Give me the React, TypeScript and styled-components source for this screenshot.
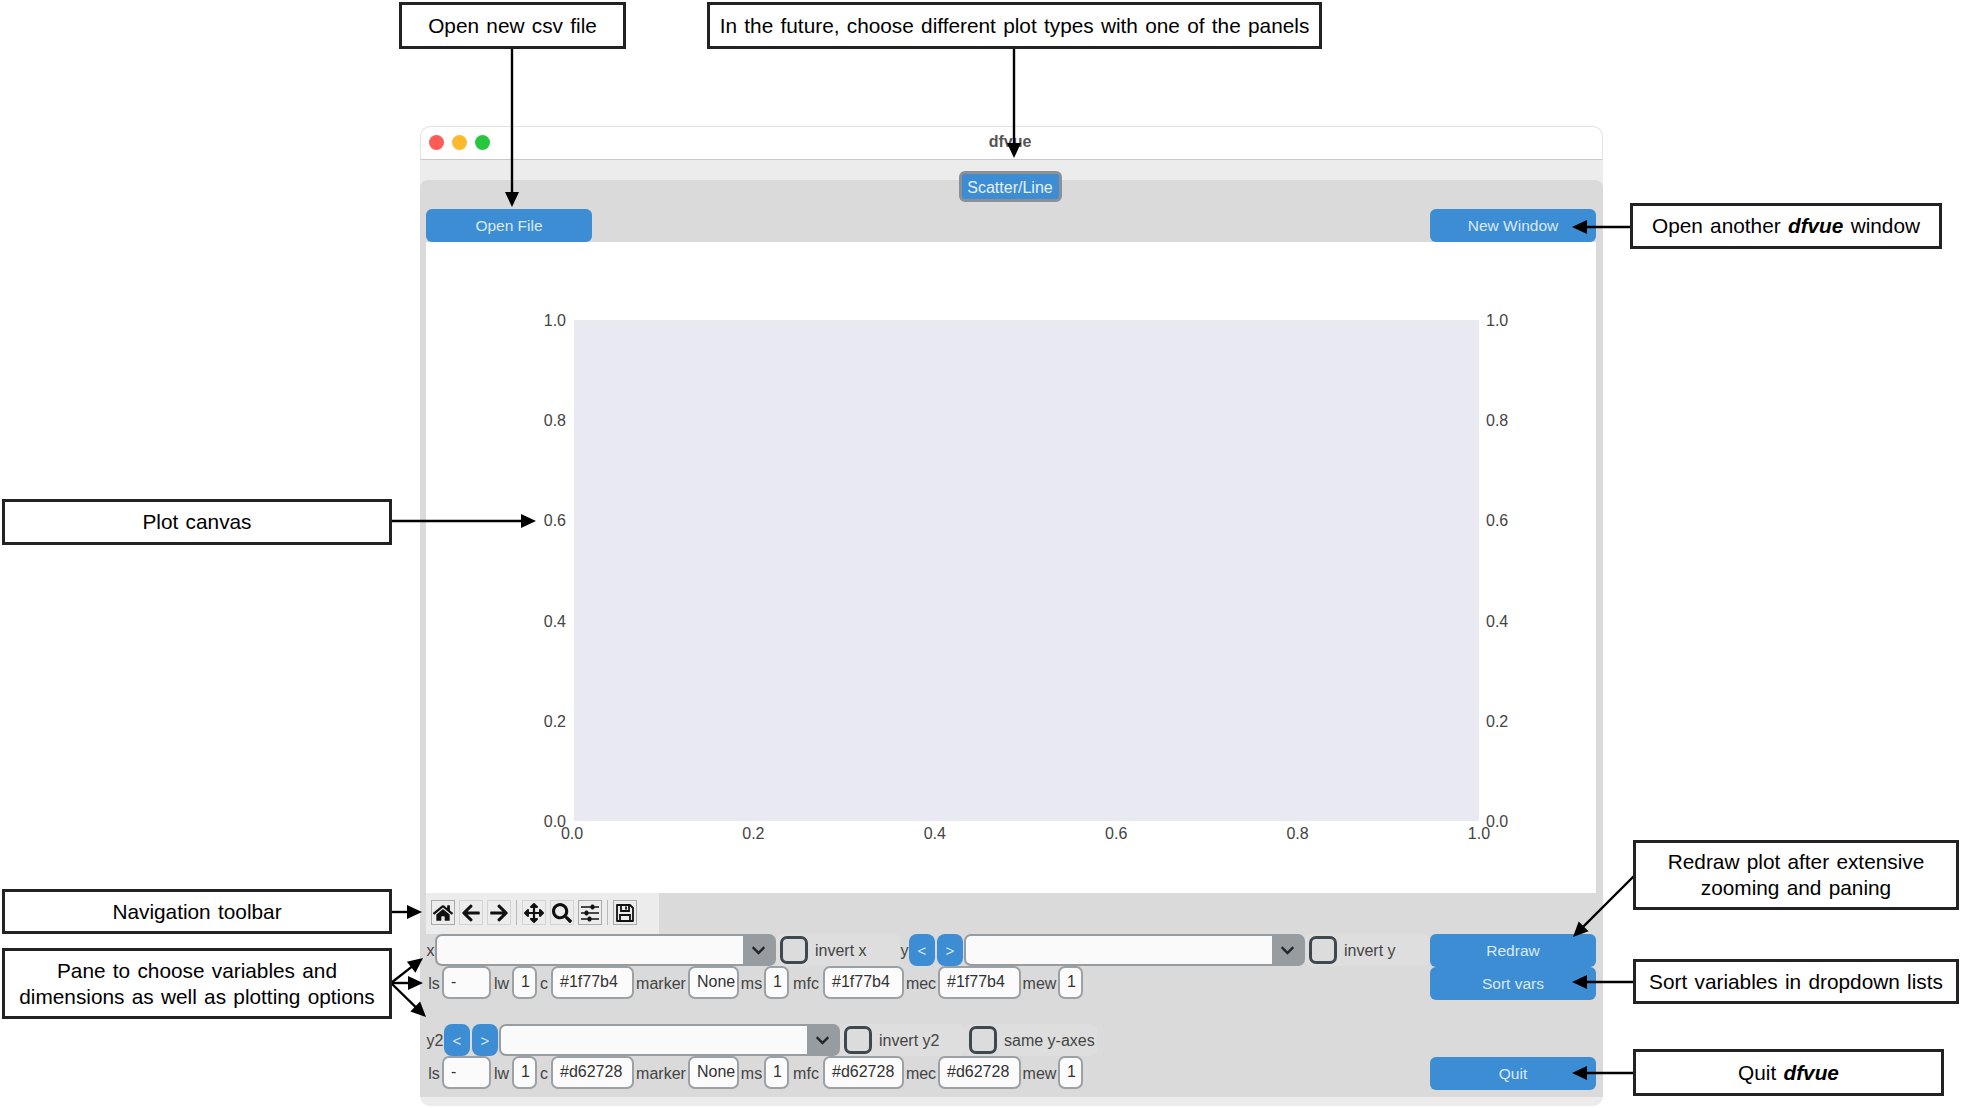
import React from "react";
import styled, { createGlobalStyle } from "styled-components";
import { FaArrowLeft, FaArrowRight, FaArrowsAlt, FaChevronDown, FaHome, FaSearch } from "react-icons/fa";

const BLUE = "#3c8dd3";
const GRAY = "#dadada";

const GlobalStyle = createGlobalStyle`
  html, body {
    margin: 0;
    padding: 0;
    background: #fff;
    font-family: "Liberation Sans", Arial, sans-serif;
  }
`;

const Page = styled.div`
  position: relative;
  width: 1963px;
  height: 1108px;
  overflow: hidden;
  padding: 126px 360px 0 420px;
  box-sizing: border-box;
`;

const Window = styled.div`
  width: 1183px;
  height: 980px;
  display: flex;
  flex-direction: column;
  background: #ececec;
  border-radius: 10px;
  overflow: hidden;
`;

const TitleBar = styled.div`
  position: relative;
  flex: none;
  height: 34px;
  box-sizing: border-box;
  padding: 0 3px 3px 0;
  display: flex;
  align-items: center;
  justify-content: center;
  background: #fff;
  border: 1px solid #e2e2e2;
  border-bottom: 1px solid #c8c8c8;
  border-radius: 10px 10px 0 0;
  font-size: 16px;
  font-weight: bold;
  color: #555;
`;

const Lights = styled.div`
  position: absolute;
  left: 8px;
  top: 8px;
  display: flex;
  gap: 8px;
`;

const Light = styled.span<{ $color: string }>`
  width: 15px;
  height: 15px;
  border-radius: 50%;
  background: ${({ $color }) => $color};
`;

const TabStrip = styled.div`
  flex: none;
  height: 20px;
  display: flex;
  justify-content: center;
  position: relative;
  z-index: 1;
`;

const Tab = styled.div`
  width: 103px;
  height: 31px;
  margin: 11px 0 0 -3px;
  padding-top: 2px;
  box-sizing: border-box;
  display: flex;
  align-items: center;
  justify-content: center;
  background: ${BLUE};
  border: 3px solid #8b9097;
  border-radius: 6px;
  color: #e6f0f9;
  font-size: 16px;
`;

const Panel = styled.div`
  flex: none;
  height: 917px;
  box-sizing: border-box;
  padding: 29px 7px 0 6px;
  background: ${GRAY};
  border-radius: 8px 8px 0 0;
  display: flex;
  flex-direction: column;
`;

const TopRow = styled.div`
  display: flex;
  justify-content: space-between;
`;

const BlueButton = styled.div<{ $gapAbove?: number }>`
  width: 166px;
  height: 33px;
  margin-top: ${({ $gapAbove }) => $gapAbove ?? 0}px;
  display: flex;
  align-items: center;
  justify-content: center;
  background: ${BLUE};
  border-radius: 6px;
  color: #dbe9f6;
  font-size: 15.5px;
`;

const Canvas = styled.div`
  height: 651px;
  box-sizing: border-box;
  padding-top: 78px;
  background: #fff;
  display: grid;
  grid-template-columns: 148px 905px 1fr;
  grid-template-rows: 501px auto;
  color: #444;
  font-size: 16px;
`;

const YAxis = styled.div<{ $right?: boolean }>`
  display: flex;
  flex-direction: column;
  justify-content: space-between;
  align-items: ${({ $right }) => ($right ? "flex-start" : "flex-end")};
  padding: ${({ $right }) => ($right ? "1px 0 0 7px" : "1px 8px 0 0")};
  margin-bottom: -1px;
`;

const YTick = styled.span`
  height: 0;
  line-height: 0;
`;

const PlotArea = styled.div`
  background: #e9e9f1;
`;

const XAxis = styled.div`
  grid-column: 2;
  display: flex;
  justify-content: space-between;
  padding-top: 4px;
  margin-left: -2px;
`;

const XTick = styled.span`
  width: 0;
  display: flex;
  justify-content: center;
`;

const Toolbar = styled.div`
  width: 233px;
  height: 41px;
  box-sizing: border-box;
  padding: 7px 0 0 5px;
  background: #ececec;
  display: flex;
  align-items: flex-start;
  gap: 4px;
`;

const ToolIcon = styled.div<{ $framed?: boolean }>`
  width: 24px;
  height: 25px;
  box-sizing: border-box;
  display: flex;
  align-items: center;
  justify-content: center;
  border: 1px solid ${({ $framed }) => ($framed ? "#a9a9a9" : "#d4d4d4")};
  color: #111;
  font-size: 20px;
`;

const ToolSeparator = styled.span`
  width: 1px;
  height: 25px;
  margin: 0 1px;
  background: #b9b9b9;
`;

const Controls = styled.div`
  display: flex;
  justify-content: space-between;
  color: #444;
  font-size: 16px;
`;

const Options = styled.div`
  display: flex;
  flex-direction: column;
`;

const Row = styled.div<{ $gapAbove?: number }>`
  display: flex;
  align-items: center;
  margin-top: ${({ $gapAbove }) => $gapAbove ?? 0}px;
`;

const Label = styled.span<{ $width: number }>`
  flex: none;
  width: ${({ $width }) => $width}px;
  padding-top: 2px;
  text-align: center;
`;

const Field = styled.div<{ $width: number }>`
  flex: none;
  width: ${({ $width }) => $width}px;
  height: 33px;
  box-sizing: border-box;
  display: flex;
  align-items: center;
  padding-left: 7px;
  padding-bottom: 2px;
  background: #fbfbfb;
  border: 2px solid #9ca1a6;
  border-radius: 7px;
  color: #333;
`;

const Combo = styled.div`
  flex: none;
  width: 341px;
  height: 32px;
  box-sizing: border-box;
  display: flex;
  background: #979ca1;
  border: 2px solid #979ca1;
  border-radius: 7px;
`;

const ComboText = styled.div`
  flex: 1;
  background: #fafafa;
  border-radius: 5px 0 0 5px;
`;

const ComboArrow = styled.div`
  width: 31px;
  display: flex;
  align-items: center;
  justify-content: center;
  color: #23272b;
  font-size: 15px;
`;

const StepGroup = styled.div`
  flex: none;
  display: flex;
  gap: 2px;
  margin-right: 1px;
`;

const StepButton = styled.div`
  width: 26px;
  height: 32px;
  display: flex;
  align-items: center;
  justify-content: center;
  background: ${BLUE};
  border-radius: 8px;
  color: #dbe9f6;
  font-size: 15px;
`;

const ToggleGroup = styled.div<{ $width: number }>`
  flex: none;
  width: ${({ $width }) => $width}px;
  height: 32px;
  display: flex;
  align-items: center;
  box-sizing: border-box;
  padding-left: 4px;
  background: #dedede;
  border-radius: 6px;
  color: #444;
  white-space: nowrap;
`;

const ToggleLabel = styled.span`
  padding-top: 2px;
`;

const CheckBox = styled.span`
  flex: none;
  width: 28px;
  height: 28px;
  margin-right: 7px;
  box-sizing: border-box;
  background: #dcdcdc;
  border: 3px solid #3f4750;
  border-radius: 7px;
`;

const SideButtons = styled.div`
  display: flex;
  flex-direction: column;
`;

const Callout = styled.div<{ $x: number; $y: number; $w: number; $h: number }>`
  position: absolute;
  left: ${({ $x }) => $x}px;
  top: ${({ $y }) => $y}px;
  width: ${({ $w }) => $w}px;
  height: ${({ $h }) => $h}px;
  box-sizing: border-box;
  display: flex;
  align-items: center;
  justify-content: center;
  text-align: center;
  background: #fff;
  border: 3px solid #222;
  color: #000;
  font-size: 20.8px;
  line-height: 26px;
  word-spacing: 1.5px;
`;

const ArrowLayer = styled.svg`
  position: absolute;
  left: 0;
  top: 0;
  pointer-events: none;
`;

const SlidersIcon = () => (
  <svg width="20" height="20" viewBox="0 0 20 20" fill="#111" stroke="#111">
    <path d="M1 4h18M1 10h18M1 16h18" strokeWidth="1.4" fill="none" />
    <rect x="11" y="2" width="3" height="4" rx="1" />
    <rect x="5" y="8" width="3" height="4" rx="1" />
    <rect x="8" y="14" width="3" height="4" rx="1" />
  </svg>
);

const SaveIcon = () => (
  <svg width="20" height="20" viewBox="0 0 20 20" fill="none" stroke="#111" strokeWidth="1.8">
    <path d="M2 2h13l3 3v13H2z" strokeLinejoin="round" />
    <path d="M6 2v6h8V2" />
    <path d="M11 3.5v3" />
    <path d="M5 18v-6h10v6" />
  </svg>
);

const ARROWS = [
  [512, 48, 512, 207],
  [1014, 48, 1014, 158],
  [1630, 227, 1572, 227],
  [391, 521, 536, 521],
  [391, 912, 422, 912],
  [391, 983, 423, 958],
  [391, 983, 423, 983],
  [391, 983, 426, 1017],
  [1634, 876, 1573, 937],
  [1634, 982, 1572, 982],
  [1634, 1073, 1572, 1073],
];

const Arrow = ({ line }: { line: number[] }) => {
  const [x1, y1, x2, y2] = line;
  const angle = (Math.atan2(y2 - y1, x2 - x1) * 180) / Math.PI;
  const len = Math.hypot(x2 - x1, y2 - y1);
  return (
    <g transform={`translate(${x1} ${y1}) rotate(${angle})`}>
      <line x1="0" y1="0" x2={len - 10} y2="0" stroke="#000" strokeWidth="2.4" />
      <polygon points={`${len},0 ${len - 15},-7 ${len - 15},7`} fill="#000" />
    </g>
  );
};

const ticks = ["0.0", "0.2", "0.4", "0.6", "0.8", "1.0"];

const StyleRow = ({ color }: { color: string }) => (
  <Row>
    <Label $width={16}>ls</Label>
    <Field $width={49}>-</Field>
    <Label $width={21}>lw</Label>
    <Field $width={25}>1</Field>
    <Label $width={14}>c</Label>
    <Field $width={83}>{color}</Field>
    <Label $width={54}>marker</Label>
    <Field $width={51}>None</Field>
    <Label $width={25}>ms</Label>
    <Field $width={25}>1</Field>
    <Label $width={34}>mfc</Label>
    <Field $width={81}>{color}</Field>
    <Label $width={34}>mec</Label>
    <Field $width={83}>{color}</Field>
    <Label $width={37}>mew</Label>
    <Field $width={25}>1</Field>
  </Row>
);

const ComboBox = () => (
  <Combo>
    <ComboText />
    <ComboArrow>
      <FaChevronDown />
    </ComboArrow>
  </Combo>
);

const Steps = () => (
  <StepGroup>
    <StepButton>&lt;</StepButton>
    <StepButton>&gt;</StepButton>
  </StepGroup>
);

const Toggle = ({ width, label }: { width: number; label: string }) => (
  <ToggleGroup $width={width}>
    <CheckBox />
    <ToggleLabel>{label}</ToggleLabel>
  </ToggleGroup>
);

export default function App() {
  return (
    <Page>
      <GlobalStyle />
      <Window>
        <TitleBar>
          <Lights>
            <Light $color="#fd5b56" />
            <Light $color="#fdb92d" />
            <Light $color="#27c63f" />
          </Lights>
          dfvue
        </TitleBar>
        <TabStrip>
          <Tab>Scatter/Line</Tab>
        </TabStrip>
        <Panel>
          <TopRow>
            <BlueButton>Open File</BlueButton>
            <BlueButton>New Window</BlueButton>
          </TopRow>
          <Canvas>
            <YAxis>
              {[...ticks].reverse().map((t) => (
                <YTick key={t}>{t}</YTick>
              ))}
            </YAxis>
            <PlotArea />
            <YAxis $right>
              {[...ticks].reverse().map((t) => (
                <YTick key={t}>{t}</YTick>
              ))}
            </YAxis>
            <XAxis>
              {ticks.map((t) => (
                <XTick key={t}>{t}</XTick>
              ))}
            </XAxis>
          </Canvas>
          <Toolbar>
            <ToolIcon $framed><FaHome /></ToolIcon>
            <ToolIcon><FaArrowLeft /></ToolIcon>
            <ToolIcon><FaArrowRight /></ToolIcon>
            <ToolSeparator />
            <ToolIcon><FaArrowsAlt /></ToolIcon>
            <ToolIcon><FaSearch /></ToolIcon>
            <ToolIcon $framed><SlidersIcon /></ToolIcon>
            <ToolSeparator />
            <ToolIcon $framed><SaveIcon /></ToolIcon>
          </Toolbar>
          <Controls>
            <Options>
              <Row>
                <Label $width={9}>x</Label>
                <ComboBox />
                <Toggle width={124} label="invert x" />
                <Label $width={9}>y</Label>
                <Steps />
                <ComboBox />
                <Toggle width={125} label="invert y" />
              </Row>
              <StyleRow color="#1f77b4" />
              <Row $gapAbove={25}>
                <Label $width={18}>y2</Label>
                <Steps />
                <ComboBox />
                <Toggle width={125} label="invert y2" />
                <Toggle width={132} label="same y-axes" />
              </Row>
              <StyleRow color="#d62728" />
            </Options>
            <SideButtons>
              <BlueButton>Redraw</BlueButton>
              <BlueButton>Sort vars</BlueButton>
              <BlueButton $gapAbove={57}>Quit</BlueButton>
            </SideButtons>
          </Controls>
        </Panel>
      </Window>

      <ArrowLayer width="1963" height="1108">
        {ARROWS.map((line, i) => (
          <Arrow key={i} line={line} />
        ))}
      </ArrowLayer>

      <Callout $x={399} $y={2} $w={227} $h={47}>Open new csv file</Callout>
      <Callout $x={707} $y={2} $w={615} $h={47}>In the future, choose different plot types with one of the panels</Callout>
      <Callout $x={1630} $y={203} $w={312} $h={46}>
        <span>Open another <b><i>dfvue</i></b> window</span>
      </Callout>
      <Callout $x={2} $y={499} $w={390} $h={46}>Plot canvas</Callout>
      <Callout $x={2} $y={889} $w={390} $h={45}>Navigation toolbar</Callout>
      <Callout $x={2} $y={948} $w={390} $h={71}>
        Pane to choose variables and<br />dimensions as well as plotting options
      </Callout>
      <Callout $x={1633} $y={840} $w={326} $h={70}>
        Redraw plot after extensive<br />zooming and paning
      </Callout>
      <Callout $x={1633} $y={959} $w={326} $h={45}>Sort variables in dropdown lists</Callout>
      <Callout $x={1633} $y={1049} $w={311} $h={47}>
        <span>Quit <b><i>dfvue</i></b></span>
      </Callout>
    </Page>
  );
}
